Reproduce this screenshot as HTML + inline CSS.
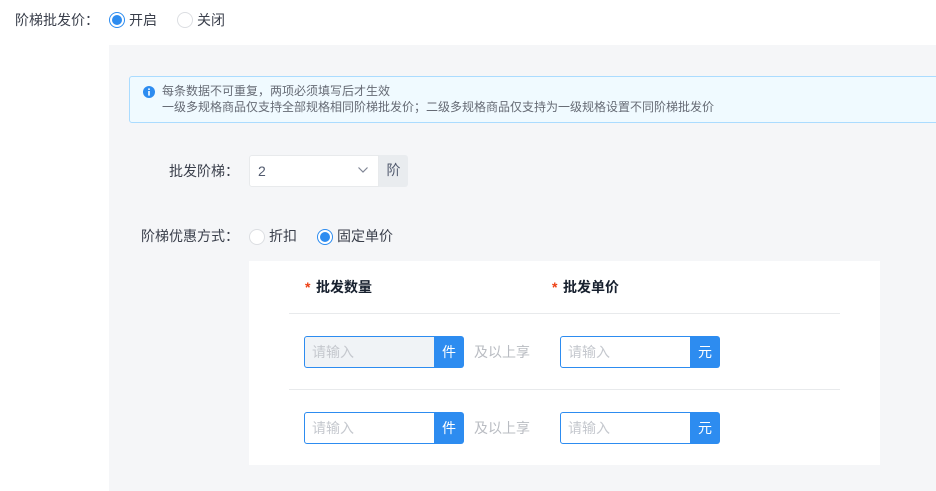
<!DOCTYPE html>
<html><head><meta charset="utf-8">
<style>
html,body{margin:0;padding:0;background:#fff;}
body{width:936px;height:491px;overflow:hidden;position:relative;font-family:"Liberation Sans","Noto Sans CJK SC",sans-serif;font-size:14px;color:#3a3f4b;}
.t{position:absolute;white-space:nowrap;line-height:20px;height:20px;}
.b{position:absolute;box-sizing:border-box;}
.r{position:absolute;box-sizing:border-box;width:16px;height:16px;border-radius:50%;border:1px solid #dcdee2;background:#fff;}
.r.on{border-color:#2d8cf0;}
.r.on:after{content:"";position:absolute;left:2px;top:2px;width:10px;height:10px;border-radius:50%;background:#2d8cf0;}
.inp{position:absolute;box-sizing:border-box;width:131px;height:32px;border:1px solid #2d8cf0;border-radius:3px 0 0 3px;background:#fff;color:#c5c8ce;line-height:30px;padding-left:7px;}
.app{position:absolute;box-sizing:border-box;width:30px;height:32px;background:#2d8cf0;color:#fff;text-align:center;line-height:32px;border-radius:0 3px 3px 0;}
.line{position:absolute;left:289px;width:551px;height:1px;background:#e8eaec;}
</style></head><body>
<div class="t" style="left:15px;top:10px">阶梯批发价：</div>
<div class="r on" style="left:109px;top:12px"></div>
<div class="t" style="left:129px;top:10px">开启</div>
<div class="r" style="left:177px;top:12px"></div>
<div class="t" style="left:197px;top:10px">关闭</div>

<div class="b" style="left:109px;top:45px;width:827px;height:446px;background:#f5f6f8"></div>

<div class="b" style="left:129px;top:76px;width:820px;height:47px;background:#f0faff;border:1px solid #abdcff;border-radius:3px"></div>
<svg style="position:absolute;left:143px;top:86px" width="12" height="12" viewBox="0 0 12 12"><circle cx="6" cy="6" r="6" fill="#2d8cf0"/><rect x="5.2" y="2.4" width="1.6" height="1.6" fill="#fff"/><rect x="5.2" y="5" width="1.6" height="4.6" fill="#fff"/></svg>
<div class="t" style="left:162px;top:81px;font-size:12px;line-height:20px;color:#666b75">每条数据不可重复，两项必须填写后才生效</div>
<div class="t" style="left:162px;top:97px;font-size:12px;line-height:20px;color:#666b75">一级多规格商品仅支持全部规格相同阶梯批发价；二级多规格商品仅支持为一级规格设置不同阶梯批发价</div>

<div class="t" style="left:169px;top:161px">批发阶梯：</div>
<div class="b" style="left:249px;top:155px;width:130px;height:32px;background:#fff;border:1px solid #e8eaec;border-radius:3px 0 0 3px"></div>
<div class="t" style="left:258px;top:161px;color:#515a6e">2</div>
<svg style="position:absolute;left:357px;top:165px" width="12" height="10" viewBox="0 0 12 10"><path d="M1.5 2.5 L6 7 L10.5 2.5" fill="none" stroke="#808695" stroke-width="1.2"/></svg>
<div class="b" style="left:379px;top:155px;width:29px;height:32px;background:#e9ecef;border-radius:0 3px 3px 0;text-align:center;line-height:30px;color:#515a6e">阶</div>

<div class="t" style="left:141px;top:226px">阶梯优惠方式：</div>
<div class="r" style="left:249px;top:229px"></div>
<div class="t" style="left:269px;top:226px">折扣</div>
<div class="r on" style="left:317px;top:229px"></div>
<div class="t" style="left:337px;top:226px">固定单价</div>

<div class="b" style="left:249px;top:261px;width:631px;height:204px;background:#fff"></div>
<div class="t" style="left:305px;top:277px;color:#ed4014;font-size:14px;font-family:'Liberation Sans',sans-serif;font-weight:bold">*</div>
<div class="t" style="left:316px;top:277px;font-weight:bold;color:#17202e">批发数量</div>
<div class="t" style="left:552px;top:277px;color:#ed4014;font-size:14px;font-family:'Liberation Sans',sans-serif;font-weight:bold">*</div>
<div class="t" style="left:563px;top:277px;font-weight:bold;color:#17202e">批发单价</div>
<div class="line" style="top:313px"></div>
<div class="line" style="top:389px"></div>

<div class="inp" style="left:304px;top:336px;background:#f0f3f6">请输入</div>
<div class="app" style="left:434px;top:336px">件</div>
<div class="t" style="left:474px;top:342px;color:#b9bcc2">及以上享</div>
<div class="inp" style="left:560px;top:336px">请输入</div>
<div class="app" style="left:690px;top:336px">元</div>

<div class="inp" style="left:304px;top:412px">请输入</div>
<div class="app" style="left:434px;top:412px">件</div>
<div class="t" style="left:474px;top:418px;color:#b9bcc2">及以上享</div>
<div class="inp" style="left:560px;top:412px">请输入</div>
<div class="app" style="left:690px;top:412px">元</div>
</body></html>
